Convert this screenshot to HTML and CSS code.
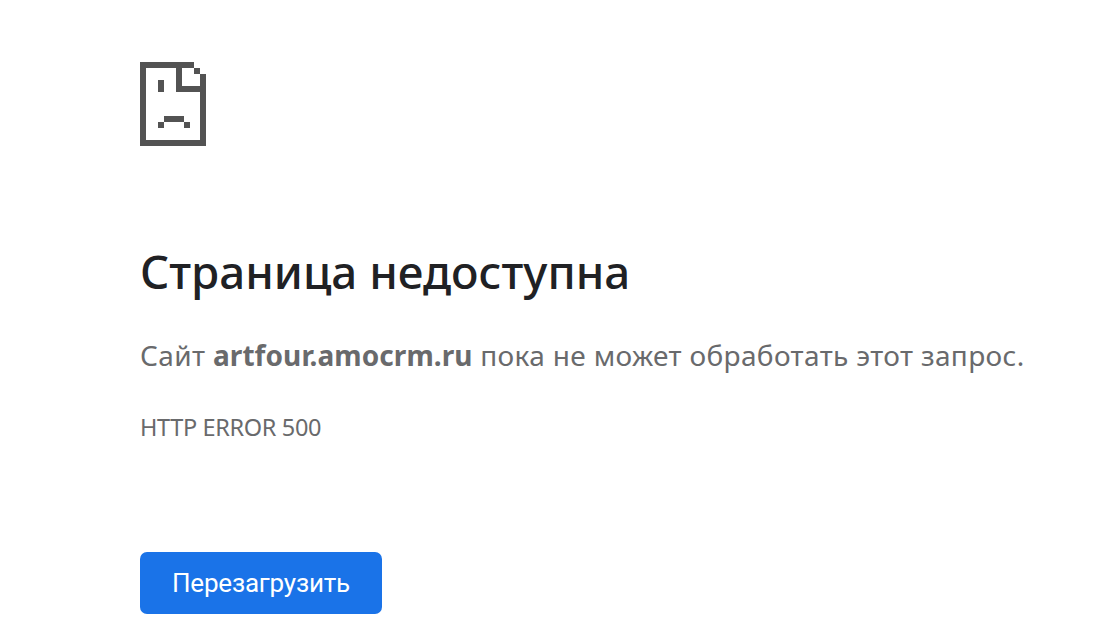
FILE: index.html
```html
<!DOCTYPE html>
<html lang="ru">
<head>
    <meta charset="UTF-8">
    <title>Страница недоступна</title>
    <link rel="stylesheet" href="styles.css">
</head>
<body>
    <main class="error-page">
        <svg class="error-icon" viewBox="0 0 66 84" shape-rendering="crispEdges" aria-hidden="true">
            <path fill="#535353" fill-rule="evenodd" d="M0 0H54V6H60V12H66V84H0ZM6 6V78H60V30H36V6ZM42 6V24H60V12H54V6Z"/>
            <path fill="#535353" d="M18 18H24V30H18ZM24 54H44V60H24ZM18 60H24V66H18ZM44 60H50V66H44Z"/>
        </svg>
        <h1 class="title">Страница недоступна</h1>
        <p class="summary">Сайт <strong>artfour.amocrm.ru</strong> пока не может обработать этот запрос.</p>
        <div class="error-code">HTTP ERROR 500</div>
        <button class="reload-button" type="button">Перезагрузить</button>
    </main>
</body>
</html>
```

FILE: styles.css
```css
body {
    margin: 0;
    background-color: #fff;
    color: #696a6c;
    font-family: "Noto Sans", sans-serif;
}
.error-page {
    display: flex;
    flex-direction: column;
    align-items: flex-start;
    padding: 62px 0 0 140px;
    white-space: nowrap;
}
.error-icon {
    width: 66px;
    height: 84px;
}
.title {
    margin: 95px 0 0;
    color: #202124;
    font-size: 45.7px;
    font-weight: 500;
    line-height: 60px;
}
.summary {
    margin: 34px 0 0;
    font-size: 28px;
    line-height: 40px;
    letter-spacing: 0.35px;
}
.summary strong {
    letter-spacing: 0.08px;
}
.error-code {
    margin-top: 36px;
    font-size: 23.5px;
    line-height: 32px;
    letter-spacing: -0.35px;
}
.reload-button {
    width: 242px;
    height: 62px;
    margin-top: 109px;
    padding: 0;
    border: none;
    border-radius: 7px;
    background-color: #1a73e8;
    color: #fff;
    font-family: Roboto, sans-serif;
    font-size: 26px;
    font-weight: 450;
    letter-spacing: -0.2px;
    cursor: pointer;
}
```
